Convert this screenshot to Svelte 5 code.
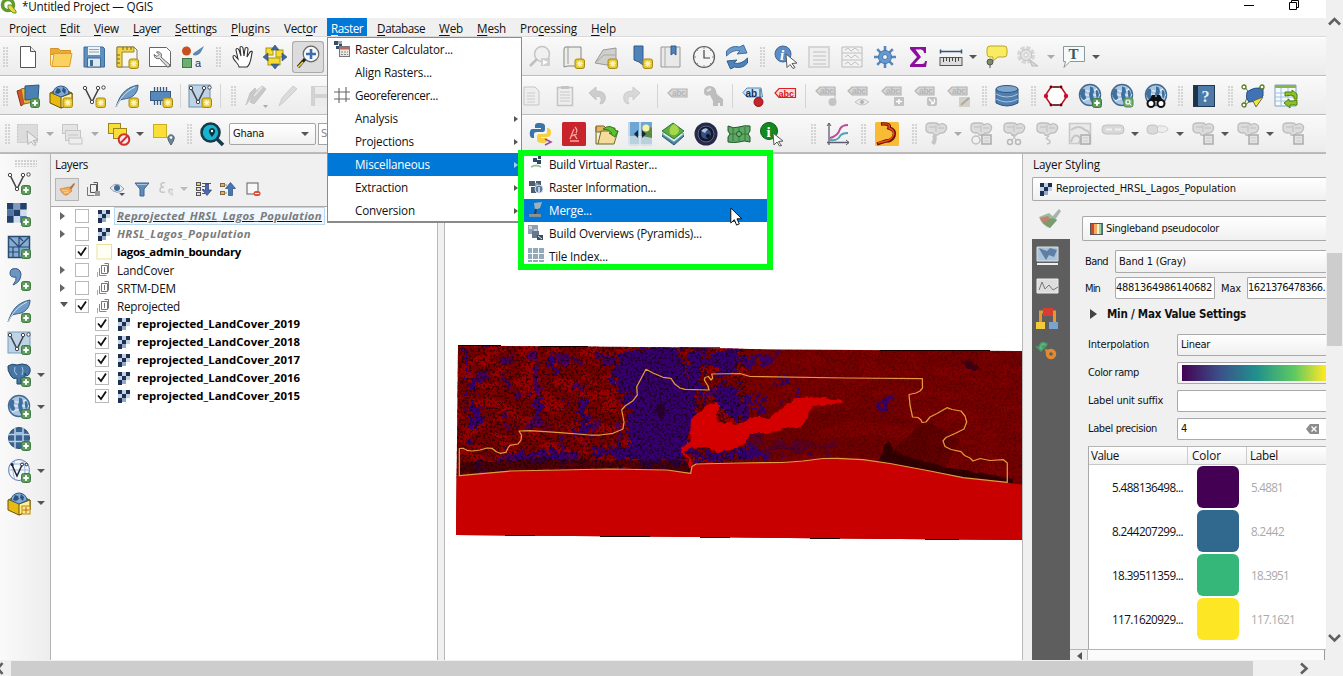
<script>
  // Stretches or tightens the tracking so a label takes the given width.
  function fit(el, w) {
    if (!w) return;
    const natural = el.getBoundingClientRect().width;
    const n = el.textContent.length;
    el.style.letterSpacing = ((w - natural) / n).toFixed(3) + 'px';
  }

  const plus = '<rect x="14.5" y="14.5" width="9" height="9" rx="2" fill="#5d9c5a" stroke="#3f7a42"/><path d="M19 16.3v5.4M16.3 19h5.4" stroke="#fff" stroke-width="2"/>';
  const star = '<rect x="14" y="14" width="9.5" height="9.5" rx="2" fill="#e6c62e" stroke="#a88a16"/><path d="M18.8 15.5v6.6M15.5 18.8h6.6M16.5 16.5l4.6 4.6M21.1 16.5l-4.6 4.6" stroke="#fff8c0" stroke-width="1.1"/>';
  const globe = '<circle cx="12" cy="11" r="10.500" fill="#a9c6e2" stroke="#44698f" stroke-width="1.400"/><path d="M5 5c5 3 9 3 14 0M2 11h20M5 17c5-3 9-3 14 0" fill="none" stroke="#fff"/><path d="M5 4.500c2 0 3 2 2 4s1 3 1 5-2 3-3 2-3-4-3-5 1-5 3-6zM12 2.500l3 1 1 4-1 3 1 4-2 5-2-4-1-5 1-4zM18 6l2 1 1 4-2 4-1-4z" fill="#3f6f9f"/>';
  const vee = '<path d="M3 4l7 14L17 4" fill="none" stroke="#444" stroke-width="1.600"/><circle cx="3" cy="4" r="1.700" fill="#fff" stroke="#444"/><circle cx="10" cy="18" r="1.700" fill="#fff" stroke="#444"/><circle cx="16" cy="4" r="1.700" fill="#fff" stroke="#444"/><circle cx="21.500" cy="3.500" r="1.700" fill="#fff" stroke="#444"/>';
  const quill = '<path d="M1 23C4 14 8 4 23 1c0 6-3 11-9 13-4 1-6 1-9 2z" fill="#6f9dc8" stroke="#3b5f86"/><path d="M1 23C5 15 10 8 20 3" fill="none" stroke="#cfe0f0"/>';
  const box3 = '<path d="M1 9l11-4 11 4v10l-11 5L1 19z" fill="#e8b90f" stroke="#6b5208"/><path d="M12 13L23 9v10l-11 5z" fill="#fff19a" stroke="#6b5208"/><path d="M1 9l11 4 11-4-3-2H4z" fill="#7d6a1c"/><path d="M4 9.500a8 7.500 0 0 1 16 0L12 13z" fill="#7fa9d6" stroke="#345a86"/><path d="M8 4l3 1 1 3-3 2-3-1zM14 3l3 3-1 4-3-3z" fill="#2f527c"/>';
  const checker = '<rect width="24" height="24" fill="#cdddec"/><path d="M0 0h8v8H0zM16 0h8v8h-8zM8 8h8v8H8zM0 16h8v8H0z" fill="#24406b"/><path d="M8 0h8v8H8z" fill="#7f9cbd"/><path d="M0 8h8v8H0zM16 16h8v8h-8z" fill="#4f75a2"/>';
  const tag = (x, y, c, f, s) => `<path d="M${x + 4} ${y}h15v8h-15l-4-4z" fill="${f}" stroke="${c}" stroke-width="1.200"/><text x="${x + 4}" y="${y + 7}" font-size="8.500" font-weight="700" font-family="Liberation Sans" textLength="14" fill="${c}">${s}</text>`;
  const G = '#bdbdbd', L = '#dcdcdc';
  const gtag = (extra) => tag(1, 3, '#b4b4b4', '#d6d6d6', 'abc') + extra;
  const blob = (extra) => `<path d="M2 4q0-3 4-3h5q3 0 4 2 2-2 5-1 4 2 2 6-2 4-6 3-2 3-6 2-1-3-3-2-4 0-5-3z" fill="${L}" stroke="${G}" stroke-width="1.300"/><path d="M5 5h6M14 6h6M12 3v7" stroke="${G}"/>` + extra;
  const gsq = '<rect x="13" y="13" width="9" height="9" fill="#e4e4e4" stroke="#b0b0b0" stroke-width="1.600"/><path d="M15 16h5M15 19h5" stroke="#ccc"/>';

  const icons = {
    file: '<path d="M4.500 1.500h10l5 5v16h-15z" fill="#fff" stroke="#555"/><path d="M14.500 1.500v5h5" fill="#eee" stroke="#555"/>',
    folder: '<path d="M1.500 3.500h8l2 2h10v4h-20z" fill="#e9a93c" stroke="#d39224"/><path d="M3 21.500L5 8.500h18l-2.500 13z" fill="#fbd25f" stroke="#dd9f2c"/><path d="M1.500 5v15l1.500 1.500" fill="none" stroke="#dd9f2c"/>',
    save: '<path d="M2 2h19l1.500 1.500V22H2z" fill="#5f8fbe" stroke="#3e6b98"/><rect x="6" y="2" width="12" height="8" fill="#eef3f8"/><path d="M7 4.500h10M7 7h10" stroke="#8aa"/><rect x="5.500" y="13" width="13" height="9" fill="#dfe8f0" stroke="#3e6b98"/><rect x="8" y="15" width="3" height="6" fill="#3e6b98"/>',
    layoutNew: '<path d="M2 2h17l3 3v17H2z" fill="#f8f8f0" stroke="#777"/><path d="M2 2h17v5H7v15H2z" fill="#f1d54a" stroke="#9b8420"/><path d="M8 2v3M12 2v3M16 2v3M2 10h3M2 14h3M2 18h3" stroke="#776010"/>' + star,
    layoutMgr: '<path d="M1.500 2.500h17l4 4v15h-21z" fill="#fff" stroke="#666"/><path d="M8.500 7q4-1 5 3l-.5 2 9 8-2 2.500-8.500-9q-5 1-5.500-4l3 2 2-2z" fill="#ddd" stroke="#666"/>',
    style: '<circle cx="5.500" cy="6" r="4.500" fill="#c8501e"/><path d="M12 10c0-3 3-3 5-5l6-4-3 6c-2 3-5 4-8 3z" fill="#5b87b5"/><rect x="1.500" y="13.500" width="9" height="9" fill="#6fae72" stroke="#3f7745"/><text x="14" y="21.500" font-size="11" font-family="Liberation Sans" fill="#333">a</text>',
    hand: '<path d="M8 22c0-3-6-7-6-10 0-2 2-2 3 0l2 2L5 5c0-2 2-2 3 0l2 6-1-8c0-2 2-2 3 0l1 8 1-7c0-2 3-2 3 0l-1 8 3-5c1-1 3-1 2 1-1 4-1 11-5 14z" fill="#fff" stroke="#333" stroke-width="1.100"/>',
    pan: '<rect x="3" y="3" width="7" height="7" fill="#f6dc2c" stroke="#a89515"/><rect x="13" y="5" width="7" height="7" fill="#f6dc2c" stroke="#a89515"/><rect x="5" y="13" width="12" height="7" fill="#f6dc2c" stroke="#a89515"/><path d="M12 0l4 5H8zM12 24l4-5H8zM0 12l5-4v8zM24 12l-5-4v8z" fill="#41689a" stroke="#2c4a74" stroke-width=".6"/>',
    zoomIn: '<circle cx="15" cy="9" r="7.800" fill="#f4f7fb" stroke="#666" stroke-width="1.200"/><path d="M15 4v10M10 9h10" stroke="#3c6fa8" stroke-width="2.600"/><path d="M9 14l-7 8" stroke="#222" stroke-width="3.200"/><path d="M7 17l-5 5" stroke="#f0d43a" stroke-width="1.700"/>',
    zoomG: '<circle cx="14" cy="9" r="7.500" fill="#f0f0f0" stroke="#c4c4c4" stroke-width="1.500"/><path d="M9 14l-7 7" stroke="#c0c0c0" stroke-width="2.500"/><rect x="13" y="13" width="9" height="8" fill="#d0d0d0"/><path d="M15 15l5 2-5 3" fill="#fff"/>',
    mapNew: '<path d="M4 2h16v19H7L3 22V4z" fill="#eeeeea" stroke="#888"/><path d="M7 2v17" stroke="#999"/>' + star,
    map3d: '<path d="M9 5l13-2v12l-9 5L1 18z" fill="#cfcfcb" stroke="#999"/><path d="M1 18l9-8h12" fill="none" stroke="#aaa"/>' + star,
    bmNew: '<path d="M5 1h9v19l-4-3-5-2z" fill="#4e82b8" stroke="#2f5b8b"/>' + star,
    bm: '<path d="M2 2h19v20H2z" fill="#e9e9e9" stroke="#999"/><path d="M6 2v20" stroke="#aaa"/><path d="M12 1h5v9l-2.500-2L12 10z" fill="#4e82b8" stroke="#2f5b8b"/>',
    clock: '<circle cx="12" cy="12" r="10.500" fill="#f4f4f4" stroke="#5c5c5c" stroke-width="1.200"/><path d="M12 5v8h6" fill="none" stroke="#444" stroke-width="1.200"/><path d="M12 2v2M12 20v2M2 12h2M20 12h2M5 5l1 1M19 5l-1 1M5 19l1-1M19 19l-1-1" stroke="#888"/>',
    refresh: '<path d="M1.500 11V6q5-6 13-4l4-2 3.500 8-10 1 3-3Q8 4 1.500 11z" fill="#6a99cb" stroke="#3f6ea3"/><path d="M22.500 13v5q-5 6-13 4l-4 2L2 16l10-1-3 3q7 2 13.500-5z" fill="#4e82b8" stroke="#31608f"/>',
    identify: '<circle cx="9" cy="9" r="8" fill="#5b8dc4" stroke="#40699b"/><text x="6" y="15" font-size="15" font-style="italic" font-weight="700" font-family="Liberation Serif" fill="#fff">i</text><path d="M12 9l11 9-5 .5 3 4-2 1-3-4-3 3z" fill="#fff" stroke="#555"/>',
    tableG: '<path d="M2 2h20v20H2z" fill="#efefef" stroke="#d6d6d6" stroke-width="2"/><path d="M6 7h13M6 11h13M6 15h13M6 19h13" stroke="#cfcfcf" stroke-width="1.500"/>',
    calcG: '<path d="M2 2h20v20H2z" fill="#f2f2f2" stroke="#bbb"/><path d="M2 8h20M2 15h20M5 5l3-2 3 3 4-3 4 3M5 12l3-2 3 3 4-3 4 3M5 19l3-2 3 3 4-3 4 3" fill="none" stroke="#c0c0c0"/>',
    gear: '<path d="M12 1v22M1 12h22M4.200 4.200l15.600 15.600M19.800 4.200L4.200 19.800" stroke="#5688bf" stroke-width="2.600"/><circle cx="12" cy="12" r="6.500" fill="#6799cf" stroke="#4577ae"/><circle cx="12" cy="12" r="2.500" fill="#eef4fa" stroke="#4577ae"/>',
    sigma: '<path d="M4 2h16v6h-2q0-3-3-3.500H9.500L15 12l-6.500 7H16q3 0 3-3h2l-1 6H4v-2l7-8L4 4z" fill="#8b0f9c"/>',
    ruler: '<path d="M1.500 6.500h21M1.500 4.500v4M22.500 4.500v4" stroke="#34557b" stroke-width="1.500"/><rect x="1" y="12.500" width="22" height="8" fill="#ddd" stroke="#555"/><path d="M4.500 13v4M7.500 13v3M10.500 13v4M13.500 13v3M16.500 13v4M19.500 13v3" stroke="#444"/>',
    tip: '<path d="M6 1h14q3 0 3 3v5q0 3-3 3h-6l-5 4v-4H6q-3 0-3-3V4q0-3 3-3z" fill="#f9ec62" stroke="#baa822"/><circle cx="6" cy="17" r="3" fill="#7d8b63" stroke="#555"/><path d="M6 20v3" stroke="#555"/>',
    gearG: '<circle cx="10" cy="10" r="7" fill="none" stroke="#d6d6d6" stroke-width="4" stroke-dasharray="4 1.500"/><circle cx="10" cy="10" r="5.500" fill="#e3e3e3" stroke="#c4c4c4"/><circle cx="10" cy="10" r="2" fill="#f5f5f5" stroke="#ccc"/><path d="M14 15l8 6h-6z" fill="#d8d8d8" stroke="#bbb"/>',
    textT: '<path d="M1.500 1.500h21v15H8l-6 6 1.500-6h-2z" fill="#f6f9f9" stroke="#8d9999"/><text x="6.500" y="14" font-size="15" font-weight="700" font-family="Liberation Serif" fill="#3c5a5a">T</text>',
    dataSrc: '<path d="M1 7l9-3 4 11-9 7z" fill="#d5532d" stroke="#8f2e12"/><path d="M5 5l10-2 2 15-9 2z" fill="#ebb436" stroke="#9a6b10"/><path d="M9 2l14-1-1 14-13 1z" fill="#4b80b5" stroke="#2d5680"/>' + plus,
    boxNew: box3 + star,
    box: box3 + '<rect x="15" y="15" width="8" height="8" fill="#f9ed86" stroke="#b8860b"/><path d="M19 16v6M16 19h6" stroke="#d05a1c"/>',
    veeNew: vee + star, veeAdd: vee + plus,
    quillNew: quill + star, quillAdd: quill + plus,
    chip: '<path d="M5.500 3v18M8.500 3v18M11.500 3v18M14.500 3v18M17.500 3v18" stroke="#345a82" stroke-width="1.300"/><rect x="1.500" y="7.500" width="20" height="9" fill="#5788bb" stroke="#345a82"/>' + star,
    vboxNew: '<rect x="1" y="1" width="21" height="22" fill="#bcd3e8" stroke="#6d8fae"/>' + vee + star,
    vboxAdd: '<rect x="1" y="1" width="22" height="21" fill="#bcd3e8" stroke="#7b9cba"/>' + vee + plus,
    pencilsG: '<path d="M6 18l4-9 8-7 4 3-7 9-5 6zM2 21l4-12 5-5 1 2z" fill="#c9c9c9" stroke="#c4c4c4"/><path d="M10 12l8-9" stroke="#e8e8e8" stroke-width="1.500"/><path d="M19 21h5l-2.500 3z" fill="#aaa"/>',
    pencilG: '<path d="M3 22l3-8L17 2l4 3L9 17z" fill="#dcdcdc" stroke="#ccc"/>',
    saveG: '<path d="M1 2h21v20H1z" fill="#d2d2d2"/><path d="M5 3h13v7H5zM5 14h13v8H5z" fill="#ebebeb"/>',
    docG: '<path d="M2 3h11l4 4v14H2z" fill="#eee" stroke="#c5c5c5"/><path d="M5 9h8M5 12h8M5 15h8M5 18h8" stroke="#ccc"/>',
    clipG: '<path d="M4.500 3.500h15v18h-15z" fill="#eee" stroke="#c4c4c4" stroke-width="1.500"/><path d="M8 2h8v3H8z" fill="#c4c4c4"/><path d="M7 8h10M7 11h10M7 14h10M7 17h10" stroke="#c8c8c8"/>',
    undoG: '<path d="M3 9l7-6v4q11 0 9 9-1 4-5 4 4-8-4-8v4z" fill="#cdcdcd" stroke="#c4c4c4"/>',
    redoG: '<path d="M21 9l-7-6v4Q3 7 5 16q1 4 5 4-4-8 4-8v4z" fill="#d8d8d8" stroke="#ccc"/>',
    abcG: tag(1, 5, '#b4b4b4', '#dadada', 'abc'),
    blobG: '<path d="M3 9q-1-6 5-7 6 0 7 5 0 3 3 5l4 3v7h-3v-3h-2v3h-5v-5l-3-6q-5 2-6-2z" fill="#bdbdbd"/><path d="M6 7l4-2" stroke="#e4e4e4" stroke-width="2"/>',
    abColor: '<path d="M6 4h14l1.500 9H6L2 8.500z" fill="#cfe4f7" stroke="#4d8cc2"/><text x="4.500" y="12.500" font-size="10" font-weight="700" font-family="Liberation Sans" fill="#15304f">ab</text><path d="M19 5v9" stroke="#345"/><circle cx="17.500" cy="18" r="4.500" fill="#c8232a" stroke="#8e1218"/>',
    abcRed: '<path d="M6 4.500h16.500v9H6L2 9z" fill="#ffdcdc" stroke="#e02020" stroke-width="1.200"/><text x="5.500" y="12.500" font-size="9" font-weight="700" font-family="Liberation Sans" fill="#d01818" textLength="15.500">abc</text>',
    tg1: gtag('<path d="M20 6v12" stroke="#bbb"/><circle cx="17.500" cy="18" r="4" fill="#c4c4c4"/>'),
    tg2: gtag('<path d="M8 18q6-6 14 0-7 6-14 0z" fill="#e8e8e8" stroke="#c4c4c4"/><circle cx="15" cy="18" r="2" fill="#b4b4b4"/>'),
    tg3: gtag('<rect x="13" y="13" width="10" height="9" rx="1" fill="#c2c2c2"/><path d="M18 15v5M15 17.500h6" stroke="#fff" stroke-width="1.500"/>'),
    tg4: gtag('<rect x="13" y="13" width="10" height="9" rx="2" fill="#c2c2c2"/><path d="M15 15l5 5M20 15q2 4-3 5" stroke="#fff" stroke-width="1.300" fill="none"/>'),
    tg5: gtag('<path d="M12 13h11v10H12z" fill="#d4d0c4"/><path d="M14 21l8-7" stroke="#aaa" stroke-width="2"/>'),
    db: '<path d="M1 5v14q11 6 22 0V5z" fill="#4f7fb0" stroke="#2e567f"/><ellipse cx="12" cy="5" rx="11" ry="3.500" fill="#7ea6ce" stroke="#2e567f"/><path d="M1 10q11 6 22 0M1 15q11 6 22 0" fill="none" stroke="#a9c4de"/>',
    hex: '<path d="M7 3h10l6 9-6 9H7l-6-9z" fill="#fff" stroke="#b5121f" stroke-width="1.500"/><path d="M9 3h6M9 21h6" stroke="#222"/><circle cx="2" cy="12" r="2.200" fill="#c8102e"/><circle cx="22" cy="12" r="2.200" fill="#c8102e"/><circle cx="7" cy="3" r="1.400" fill="#600"/><circle cx="17" cy="3" r="1.400" fill="#600"/><circle cx="7" cy="21" r="1.400" fill="#600"/><circle cx="17" cy="21" r="1.400" fill="#600"/>',
    globeAdd: globe + plus,
    globeFind: globe + '<rect x="14" y="14" width="9" height="9" rx="2" fill="#76b077" stroke="#4b8a50"/><circle cx="18" cy="18" r="2" fill="none" stroke="#fff" stroke-width="1.200"/><path d="M19.500 19.500l2 2" stroke="#fff"/>',
    globeBino: globe + '<path d="M5 17l3-6h3v2h2v-2h3l3 6z" fill="#111"/><circle cx="7" cy="19.500" r="3.500" fill="#fff" stroke="#111" stroke-width="2"/><circle cx="17" cy="19.500" r="3.500" fill="#fff" stroke="#111" stroke-width="2"/>',
    globe2: '<circle cx="12" cy="11" r="10.500" fill="#3a6390" stroke="#2c4a6b"/><path d="M8 1v20M16 1v20M1 7.500h22M1 14.500h22" stroke="#bcd2e8" stroke-width="1.500"/><path d="M8 5h8v3H8z" fill="#9fc0e2"/>' + plus,
    globeV: '<circle cx="12" cy="11" r="10.500" fill="#f4f8ff" stroke="#5c7ba8"/><path d="M1 11h22M8 1q-4 10 0 20M16 1q4 10 0 20M4 5h16" fill="none" stroke="#9db7da"/><path d="M5 6l5 11 5-11" fill="none" stroke="#223" stroke-width="1.500"/><circle cx="5" cy="5.500" r="1.500" fill="#223"/><circle cx="15" cy="5.500" r="1.500" fill="#fff" stroke="#223"/><circle cx="19.500" cy="5.500" r="1.300" fill="#fff" stroke="#223"/>' + plus,
    help: '<rect x="1.500" y="1.500" width="21" height="21" fill="#4b7aa9" stroke="#203850"/><path d="M2 2h4v20H2z" fill="#1f3346"/><text x="9.500" y="18" font-size="16" font-family="Liberation Serif" font-weight="700" fill="#e5f0fa">?</text>',
    poly: '<path d="M4 3l4 6-5 12M20 3l-6 4M4 21l8-6" stroke="#587a25" fill="none"/><path d="M6 8q8-6 16-3v7l-6 5-8 1q-4-4-2-10z" fill="#3f73b6" stroke="#27508a"/><circle cx="3" cy="3" r="2" fill="#fff" stroke="#587a25" stroke-width="1.300"/><circle cx="21" cy="3" r="2" fill="#fff" stroke="#587a25" stroke-width="1.300"/><circle cx="3" cy="21" r="2" fill="#fff" stroke="#587a25" stroke-width="1.300"/><path d="M12 17l10-4-7 10z" fill="#f5e92b" stroke="#666"/>',
    sheet: '<path d="M1 1h21v21H1z" fill="#f4faff" stroke="#7da4c4"/><path d="M1 1h21v3H1z" fill="#8bb544"/><path d="M1 9h20M1 13h20M1 17h20M7 4v18M14 4v18" stroke="#9fc0da"/><path d="M11 12V8h7V6l5 4v5h-3v-3h-2v-1zM23 16v5h-7v3l-6-5 5-4v2h4z" fill="#8cc226" stroke="#51800f"/>',
    selG: '<path d="M1.500 2.500h20v18h-20z" fill="#dcdcdc" stroke="#c4c4c4" stroke-dasharray="2 1"/><path d="M11 9l11 9-5 .5 3 4-2 1-3-4-3 3z" fill="#eee" stroke="#b4b4b4"/>',
    sel2G: '<rect x="1.500" y="2.500" width="15" height="9" fill="#e4e4e4" stroke="#c6c6c6"/><rect x="4.500" y="8.500" width="15" height="10" fill="#e4e4e4" stroke="#c6c6c6"/><path d="M7 13h10M7 16h14v6H8v-6" stroke="#c6c6c6" fill="#eee"/>',
    desel: '<rect x="1.500" y="1.500" width="12" height="10" fill="#f8de37" stroke="#9b8718"/><rect x="6.500" y="6.500" width="13" height="10" fill="#f8de37" stroke="#9b8718"/><circle cx="17" cy="17.500" r="5.300" fill="#fbe5e5" stroke="#cf3030" stroke-width="2"/><path d="M13.500 21l7-7" stroke="#cf3030" stroke-width="2"/>',
    selPin: '<rect x="1.500" y="2.500" width="13" height="13" fill="#f8de37" stroke="#c9ae20"/><path d="M19 23q-4-6-3-8.500 3-3.500 6 0 1 2.500-3 8.500z" fill="#6e8596" stroke="#4e6170"/><circle cx="19" cy="15.500" r="1.300" fill="#fff"/>',
    lens: '<circle cx="10.500" cy="10.500" r="9" fill="#18b4cf" stroke="#173a48" stroke-width="2.600"/><path d="M17 17l6 6" stroke="#173a48" stroke-width="3.500"/><path d="M12 15q-4-5-3-7 3-4 6 0 1 2-3 7z" fill="#10303c"/><circle cx="12" cy="9" r="1.200" fill="#fff"/>',
    python: '<path d="M11 1c-6 0-5 2-5 5h6v1H3c-3 0-3 9 0 9h2v-4q0-2 3-2h6q2 0 2-3V4c0-2-2-3-5-3z" fill="#3a75a8"/><path d="M13 21c6 0 5-2 5-5h-6v-1h7c4 0 4-9 0-9h-1v4q0 2-3 2h-5q-2 0-2 3v3c0 2 2 3 5 3z" fill="#f8cf43"/><path d="M16 17l6 3-6 3" stroke="#934a9b" stroke-width="1.500" fill="none"/>',
    red: '<rect width="24" height="24" rx="1.500" fill="#c9242c"/><path d="M13 5q3 3 1 6M12 7l-4 10M12 12l3 5M10 14l5-2M8 19h9" stroke="#f3a9a4" fill="none" stroke-width="1.300"/>',
    folderG: '<path d="M1 4h8l2 2h9v4H1z" fill="#e4b55f" stroke="#7a6526"/><path d="M1 5v17h18l4-13H6L3 22" fill="#f6dc9a" stroke="#6b6a26"/><path d="M8 7q8-6 13 2h2l-3 6-6-4h3q-3-4-9-4z" fill="#59c234" stroke="#2b7d16"/>',
    sky: '<rect width="24" height="24" fill="#6fa6d4"/><path d="M0 14h24v10H0z" fill="#b9d0dd"/><path d="M12 0v24M1 0v24M0 23h24" stroke="#dfe9f4" stroke-width="1.500"/><path d="M14 14q5-12 10-8v10z" fill="#5a8a49"/><circle cx="18" cy="6" r="3.500" fill="#f4f49c"/><path d="M6 12l4-4v8zM18 12l-4-4v8z" fill="#15253a"/>',
    layersG: '<path d="M1 14l12 9 10-9-12-7z" fill="#4c7f9e" stroke="#2c5a74"/><path d="M1 12l12 8 10-8-12-7z" fill="#d9eef2" stroke="#6aa"/><path d="M1 9l12 8 10-8L12 1z" fill="#5cab45" stroke="#2f7d2c"/><path d="M9 12q-2-7 4-10 7 4 4 9-3 4-8 1z" fill="#a6d84a"/>',
    camera: '<circle cx="12" cy="12" r="11.500" fill="#252a48"/><circle cx="12" cy="12" r="8" fill="#14182a" stroke="#5c6389"/><circle cx="12" cy="12" r="5" fill="#34508a"/><path d="M7 9q3-4 7-2l-3 4z" fill="#a8c6e2"/><circle cx="14" cy="14" r="2" fill="#111"/>',
    puzzle: '<path d="M1 4q6 3 11 1 6-2 11-1v5l-2 3 2 3v5q-6-2-11 0-5 1-11 0v-5l2-3-2-3z" fill="#5fa765" stroke="#20582a"/><path d="M12 5v14M2 12h20M6 5v14M18 5v14" stroke="#34783c"/><circle cx="12" cy="12" r="2.500" fill="#6dbb74" stroke="#20582a"/>',
    infoG: '<circle cx="9" cy="9" r="8.500" fill="#138a1f" stroke="#0c6015"/><text x="6.500" y="15" font-size="15" font-weight="700" font-family="Liberation Serif" fill="#fff">i</text><path d="M13 11l10 8-4.500.5 3 4-2 .5-2.500-4-3 3z" fill="#fff" stroke="#555"/>',
    chart: '<path d="M3 1v22M1 20.500h22" stroke="#5d5d6d" stroke-width="1.300" fill="none"/><path d="M1 4l2-3 2 3M20 18l3 2.500-3 2.500" fill="none" stroke="#5d5d6d"/><path d="M4 16q8-2 10-9 2-4 8-4" stroke="#c04a98" stroke-width="2" fill="none"/><path d="M4 18q8 1 10-4 2-3 8-3" stroke="#4da3b8" stroke-width="2" fill="none"/>',
    river: '<rect width="24" height="24" rx="1.500" fill="#f8bb35"/><path d="M6 2q10-1 8 4 7 2 5 8-2 5-8 5l-9 3" fill="none" stroke="#6b1108" stroke-width="3.400"/><path d="M7 2q9-1 7 4 7 3 4 8-2 4-7 5l-8 2" fill="none" stroke="#f04a1c" stroke-width="1.400"/>',
    b1: blob('<path d="M10 13q2 4-1 9" stroke="#c4c4c4" stroke-width="4" fill="none"/>'),
    b2: blob('<circle cx="7" cy="18" r="4" fill="none" stroke="#c0c0c0" stroke-width="1.500"/>' + gsq),
    b3: blob('<circle cx="8" cy="20" r="2.500" fill="none" stroke="#b8b8b8" stroke-width="1.500"/><circle cx="16" cy="20" r="2.500" fill="none" stroke="#b8b8b8" stroke-width="1.500"/><path d="M10 18l6-7M14 18l-4-6" stroke="#b8b8b8"/>'),
    b4: blob('<path d="M14 14q-5 3 0 4 3 3-2 4" fill="none" stroke="#c0c0c0" stroke-width="1.500"/>'),
    b5: '<path d="M1.500 1.500h21v20h-21z" fill="#e9e9e9" stroke="#cacaca" stroke-width="1.600"/><path d="M3 8q8-6 14 0 4 1 5 4M3 20q2-8 7-6 4 2 1 7" fill="none" stroke="#c6c6c6" stroke-width="2"/>' + gsq,
    b6: '<rect x="1" y="3" width="22" height="9" rx="4" fill="#d8d8d8" stroke="#c2c2c2"/><path d="M5 7.500h6M14 7.500h6" stroke="#f0f0f0" stroke-width="2"/>',
    b7: '<rect x="1" y="3" width="11" height="9" rx="4" fill="#dadada" stroke="#c2c2c2"/><path d="M12 4q10-1 10 4-4 4-10 2" fill="#ededed" stroke="#d0d0d0"/>',
    b8: blob(gsq),
    rasterAdd: '<g transform="scale(.82)">' + checker + '</g>' + plus,
    meshAdd: '<rect x="1.500" y="1.500" width="21" height="21" fill="#86acd2" stroke="#2b4d72" stroke-width="1.500"/><path d="M12 1v22M1 12h22M2 2l10 10M12 12L22 2M6 12v10M2 17h10M12 2l4 4" stroke="#274a70" fill="none" stroke-width="1.200"/>' + plus,
    comma: '<path d="M5 2q8-2 9 5 0 8-8 11 4-5 3-8-6 1-6-4 0-3 2-4z" fill="#6c95c2" stroke="#345b86"/>' + plus,
    elephant: '<path d="M1 3q4-3 9-1 5-2 10 0 4 2 3 7-1 4-4 4l-1-3v4l-4 1v6h-4v-6Q6 17 4 13 0 7 1 3z" fill="#4576a6" stroke="#234866"/><path d="M8 4q-2 5 2 8M15 4q2 3 0 8" stroke="#a9c8e4" fill="none"/>' + plus,
  };

  const small = {
    brush: '<path d="M10 7l5-5 1 1-4 6z" fill="#b5763a"/><path d="M1 8l9-2 3 4-5 4q-4 1-7-6z" fill="#f0a95a" stroke="#d9783a" stroke-width=".7"/><path d="M3 9l6 1M5 12l5-1" stroke="#f8d38a"/>',
    group: '<path d="M5.500 3.500h6v8h-6zM8.500 1.500h4v9M8.500 5v5" fill="none" stroke="#777"/><path d="M3.500 6v7.500h7" fill="none" stroke="#888"/><path d="M1.500 10v5" stroke="#aaa"/>',
    groupAdd: '<path d="M5.500 11.500v-8h6v8zM8.500 1.500h4v9" fill="none" stroke="#555"/><path d="M2.500 6v8.500h7" fill="none" stroke="#777"/><rect x="10" y="10" width="5" height="5" fill="#999"/>',
    eye: '<path d="M0 7q7-8 14 1-7 7-14-1z" fill="#e8eef4" stroke="#99a"/><circle cx="7" cy="7" r="3" fill="#3f6c92"/><path d="M9 12h6l-3 3z" fill="#456"/>',
    filter: '<path d="M1 2h14l-5 6v7H6V8z" fill="#5f8cbb" stroke="#41658d"/><path d="M3 3.500h10" stroke="#a8c6e2"/>',
    expr: '<path d="M6 2Q2 1 2 4q0 2 3 2-4 0-4 3t5 2M14 9q-4-2-4 1 0 3 4 4" stroke="#c8c8c8" stroke-width="1.600" fill="none"/><circle cx="12" cy="12" r="2" fill="#ddd"/>',
    expand: '<rect x=".5" y="1.500" width="4" height="3" fill="#f4d23c" stroke="#555"/><rect x=".5" y="6.500" width="4" height="3" fill="#ddd" stroke="#555"/><rect x=".5" y="11.500" width="4" height="3" fill="#ddd" stroke="#555"/><path d="M6 2.500h9M6 5.500h3M6 8.500h2M6 12.500h3" stroke="#556"/><path d="M9.500 3h3v6h3L11 14.500 6.500 9h3z" fill="#4a6bb0" stroke="#2c4379" stroke-width=".7"/>',
    collapse: '<rect x=".5" y="2.500" width="4" height="3" fill="#f4b23c" stroke="#765"/><rect x=".5" y="10.500" width="4" height="3" fill="#f4b23c" stroke="#765"/><path d="M4 4h3M4 12h3" stroke="#b84"/><path d="M8.500 14.500v-7h-3L10.500 1.500l5 6h-3v7z" fill="#4477b5" stroke="#2c4f80" stroke-width=".7"/>',
    remove: '<rect x="2" y="2" width="11" height="11" fill="#f8f8f8" stroke="#777" stroke-width="1.200"/><rect x="8.500" y="10" width="7" height="5" rx="2.500" fill="#e04c38"/><path d="M10 12.500h4" stroke="#fff"/>',
    raster: '<path d="M2 2h4v4H2zM10 2h4v4h-4zM6 6h4v4H6zM2 10h4v5H2z" fill="#1d3054"/><path d="M6 2h4v4H6zM2 6h4v4H2zM10 6h4v4h-4z" fill="#c3d2e4"/><path d="M6 10h4v4H6z" fill="#93abc8"/>',
    poly: '<rect x="1" y=".5" width="14.500" height="14.500" fill="#fffff4" stroke="#ecdf9c"/>',
    calc: '<path d="M0 0h4v4H0zM5 3h3v3H5zM2 5h3v3H2z" fill="#35506b"/><path d="M4 0h4v3H4z" fill="#9ab"/><rect x="5.500" y="5.500" width="10" height="10" fill="#ece6e2" stroke="#777"/><path d="M5 6h11v2.500H5z" fill="#b76a5c"/><path d="M7 11h7M7 13.500h7" stroke="#888" stroke-dasharray="2 1"/>',
    georef: '<path d="M5 1v15M12 0v15M0 5h16M0 12h16" stroke="#666" stroke-width="1.100" fill="none"/>',
    vrt: '<path d="M5 2h4v4H5zM10 0h3v3h-3zM9 4h4v4H9z" fill="#2e4a62"/><path d="M3 11q5-3 10 0" stroke="#9cc0a4" stroke-width="2" fill="none"/>',
    rinfo: '<path d="M1 2h6v5H1zM8 2h5v4H8zM3 8h5v6H3z" fill="#4a6076"/><path d="M7 4h3v5H7z" fill="#8c9dae"/><circle cx="11" cy="10" r="4" fill="#5b7b9c" stroke="#dde"/><path d="M11 8v5" stroke="#fff" stroke-width="1.300"/>',
    merge: '<path d="M6 1l8-1-2 6-5 2z" fill="#a4b0b7"/><path d="M8 7l-1 5" stroke="#3a3a3a" stroke-width="2"/><path d="M1 12h12v3H1z" fill="#7f8f98"/><path d="M3 13h8" stroke="#b98a6b"/>',
    over: '<path d="M0 0h10v9H0z" fill="#8fa0b0"/><path d="M1 1h3v3H1zM6 4h3v3H6z" fill="#c9d3dc"/><path d="M4 6h7v7H4z" fill="#64798e"/><path d="M9 10h6v5H9z" fill="#3c4d5d"/><path d="M10 11l4 3" stroke="#eee"/>',
    tile: '<path d="M0 0h4v5H0zM5 0h5v5H5zM11 0h5v5h-5zM0 6h4v5H0zM5 6h5v5H5zM11 6h5v5h-5zM0 12h4v2H0zM5 12h5v2H5zM11 12h5v2h-5z" fill="#93abb9"/>',
    ramp: '<rect x=".5" y="2.500" width="12" height="11" fill="#f8f3cc" stroke="#555"/><path d="M1 3h3v10H1z" fill="#d6422c"/><path d="M4 3h3v10H4z" fill="#f5a95a"/><path d="M9 3h2v10H9z" fill="#9fd09f"/><path d="M11 3h1.500v10H11z" fill="#3b86a8"/>',
  };

  const g = 'grip', a = 'arr', al = 'arrL', sp = 'sep';
  const bars = [
    [[g,6],['file',28],['folder',61],['save',94],['layoutNew',127],['layoutMgr',160],['style',193],[g,219],['hand',243],['pan',275],['zoomIn',308],
     ['zoomG',540],['mapNew',573],['map3d',606],['bmNew',641],['bm',671],['clock',704],['refresh',737],[g,763],['identify',786],['tableG',819],['calcG',852],['gear',885],['sigma',918],['ruler',951],[a,973],['tip',996],['gearG',1028],[al,1051],['textT',1074],[a,1096]],
    [[g,6],['dataSrc',28],['boxNew',61],['veeNew',94],['quillNew',127],['chip',161],[sp,181],['vboxNew',200],[sp,221],[g,234],['pencilsG',256],['pencilG',288],['saveG',322],
     ['docG',534],['clipG',565],['undoG',598],['redoG',631],[sp,658],['abcG',679],['blobG',713],[sp,733],['abColor',753],['abcRed',785],[sp,806],['tg1',827],['tg2',859],['tg3',893],['tg4',926],['tg5',959],[g,985],['db',1007],[g,1034],['hex',1056],['globeAdd',1090],['globeFind',1122],['globeBino',1156],[g,1181],['help',1204],[g,1231],['poly',1253],['sheet',1286]],
    [[g,8],['selG',28],[al,50],['sel2G',73],[al,95],['desel',119],[a,140],['selPin',164],[g,190],['lens',212],['combo',272.5],['entry',419],
     ['python',541],['red',574],['folderG',607],['sky',640],['layersG',673],['camera',706],['puzzle',739],['infoG',772],[g,814],['chart',838],[g,864],['river',887],[g,915],['b1',936],[al,958],['b2',981],['b3',1014],['b4',1047],['b5',1080],['b6',1113],[a,1135],['b7',1158],[a,1180],['b8',1203],[a,1225],['b8',1248],[a,1270],['b8',1293]],
  ];
  const widths = { grip: 6, arr: 8, arrL: 8, sep: 2, combo: 87, entry: 202 };
  const toolbars = bars.map((row) => {
    let end = 0;
    return row.map(([k, c]) => {
      const w = widths[k] ?? 24;
      const gap = c - w / 2 - end;
      end = c + w / 2;
      return { k, gap };
    });
  });

  const menus = [['Pro<u>j</u>ect',37],['<u>E</u>dit',20],['<u>V</u>iew',25],['<u>L</u>ayer',28],['<u>S</u>ettings',42],['<u>P</u>lugins',39],['Vect<u>o</u>r',33],['<u>R</u>aster',32],['<u>D</u>atabase',48],['<u>W</u>eb',24],['<u>M</u>esh',29],['Pro<u>c</u>essing',57],['<u>H</u>elp',25]];
  const rasterMenu = [['Raster Calculator...',98,'calc'],['Align Rasters...',77],['Georeferencer...',83,'georef'],['Analysis',43,,1],['Projections',59,,1],['Miscellaneous',75,,1],['Extraction',53,,1],['Conversion',60,,1]];
  const subMenu = [['Build Virtual Raster...',108,'vrt'],['Raster Information...',107,'rinfo'],['Merge...',43,'merge'],['Build Overviews (Pyramids)...',153,'over'],['Tile Index...',59,'tile']];
  const layers = [
    { n: 'Reprojected_HRSL_Lagos_Population', w: 205, i: 'raster', e: 'c', s: 'off', focus: true },
    { n: 'HRSL_Lagos_Population', w: 134, i: 'raster', e: 'c', s: 'off' },
    { n: 'lagos_admin_boundary', w: 124, i: 'poly', on: 1, s: 'bold' },
    { n: 'LandCover', w: 57, i: 'group', e: 'c' },
    { n: 'SRTM-DEM', w: 59, i: 'group', e: 'c' },
    { n: 'Reprojected', w: 63, i: 'group', e: 'o', on: 1 },
    ...[2019, 2018, 2017, 2016, 2015].map((y) => ({ n: 'reprojected_LandCover_' + y, w: 163, i: 'raster', on: 1, s: 'bold', child: true })),
  ];
  const side = [['veeAdd'],['rasterAdd'],['meshAdd'],['comma'],['quillAdd'],['vboxAdd'],['elephant',1],['globeAdd',1],['globe2'],['globeV',1],['box',1]];
  const classes = [['5.488136498...',71,'#440154','5.4881',32],['8.244207299...',71,'#31688e','8.2442',33],['18.39511359...',71,'#35b779','18.3951',38],['117.1620929...',71,'#fde725','117.1621',44]];
</script>

{#snippet ic(k)}<svg class="ic" width="24" height="24" viewBox="0 0 24 24">{@html icons[k]}</svg>{/snippet}
{#snippet sm(k)}<svg class="sm" width="16" height="16" viewBox="0 0 16 16">{@html small[k] ?? ''}</svg>{/snippet}
{#snippet tx(s, w, c = '')}<span class="tx {c}" use:fit={w}>{@html s}</span>{/snippet}

<div class="screen">
  <div class="app">
    <header class="title">
      <svg class="logo" width="17" height="14" viewBox="0 0 17 14"><circle cx="8" cy="5" r="5.500" fill="none" stroke="#5f9a2e" stroke-width="3.600"/><path d="M8 5l3 0 5 6v2h-3L8 8z" fill="#f0d33c" stroke="#5f9a2e"/></svg>
      {@render tx('*Untitled Project — QGIS', 131)}
      <svg class="winbtn" width="60" height="14" viewBox="0 0 60 14"><path d="M2 5.500h10" stroke="#000"/><path d="M47.500 2.500h7v7h-7zM49.500 2V.500h7v7H55" fill="none" stroke="#000"/></svg>
    </header>

    <nav class="menubar">
      {#each menus as [m, w], i}
        <span class="menu" class:open={i === 7}>{@render tx(m, w)}</span>
      {/each}
    </nav>

    {#each toolbars as row}
      <div class="toolbar">
        {#each row as { k, gap }}
          <div class="slot {k}" style="margin-left:{gap}px">
            {#if k === 'combo'}{@render tx('Ghana', 31, 'tah')}<i class="down"></i>
            {:else if k === 'entry'}<span class="tx tah ph">S</span>
            {:else if icons[k]}{@render ic(k)}{/if}
          </div>
        {/each}
      </div>
    {/each}

    <main>
      <aside class="side">
        <div class="hgrip"></div>
        {#each side as [k, drop]}
          <div class="srow">{@render ic(k)}{#if drop}<i class="down"></i>{/if}</div>
        {/each}
      </aside>

      <section class="layers">
        <h2>{@render tx('Layers', 33)}</h2>
        <div class="ltools">
          <span class="lt active">{@render sm('brush')}</span>
          {#each ['groupAdd', 'eye', 'filter', 'expr'] as k}<span class="lt">{@render sm(k)}</span>{/each}
          <i class="down light"></i>
          {#each ['expand', 'collapse', 'remove'] as k}<span class="lt">{@render sm(k)}</span>{/each}
        </div>
        <div class="tree">
          {#each layers as l}
            <div class="lrow" class:child={l.child}>
              <span class="exp {l.e ?? ''}"></span>
              <span class="cb">{#if l.on}<svg width="12" height="12" viewBox="0 0 12 12"><path d="M2 5.500l3 3.500 5-7.500" fill="none" stroke="#111" stroke-width="1.800"/></svg>{/if}</span>
              {@render sm(l.i)}
              <span class="lname" class:focus={l.focus}>{@render tx(l.n, l.w, l.s ?? '')}</span>
            </div>
          {/each}
        </div>
      </section>

      <section class="canvas">
        <svg width="577" height="506" viewBox="445 154 577 506">
          <defs>
            <clipPath id="ras"><path d="M458 345.500L586 346.500 680 347.500 780 349.500 1022 351V540L840 538.500 700 537 456 535z"/></clipPath>
            <filter id="specks" x="0" y="0" width="1" height="1" color-interpolation-filters="sRGB"><feTurbulence type="fractalNoise" baseFrequency=".42" numOctaves="3" seed="4"/><feColorMatrix values="0 0 0 0 .08  0 0 0 0 0  0 0 0 0 .02  6 5 0 0 -5.500"/></filter>
            <filter id="patch" x="0" y="0" width="1" height="1" color-interpolation-filters="sRGB"><feTurbulence type="fractalNoise" baseFrequency=".07 .06" numOctaves="5" seed="11"/><feColorMatrix values="0 0 0 0 .2  0 0 0 0 0  0 0 0 0 .47  16 0 0 0 -10.300"/></filter>
            <filter id="reds" x="0" y="0" width="1" height="1" color-interpolation-filters="sRGB"><feTurbulence type="fractalNoise" baseFrequency=".05 .09" numOctaves="5" seed="23"/><feColorMatrix values="0 0 0 0 .66  0 0 0 0 0  0 0 0 0 0  0 9 0 0 -4.400"/></filter>
            <filter id="rag" x="-.1" y="-.1" width="1.200" height="1.200"><feTurbulence type="fractalNoise" baseFrequency=".13" numOctaves="4" seed="7"/><feDisplacementMap in="SourceGraphic" scale="22" xChannelSelector="R" yChannelSelector="G"/></filter>
            <filter id="rag2" x="-.1" y="-.1" width="1.200" height="1.200"><feTurbulence type="fractalNoise" baseFrequency=".14" numOctaves="2" seed="3"/><feDisplacementMap in="SourceGraphic" scale="5" xChannelSelector="R" yChannelSelector="G"/></filter>
          </defs>
          <g clip-path="url(#ras)">
            <path d="M450 340h580v200H450z" fill="#740000"/>
            <rect x="456" y="343" width="290" height="135" filter="url(#reds)" opacity=".7"/>
            <rect x="740" y="343" width="282" height="140" filter="url(#reds)" opacity=".2"/>
            <rect x="456" y="343" width="330" height="135" filter="url(#patch)" opacity=".75"/>
            <g filter="url(#rag)" fill="#35006d">
              <path d="M620 347l56 0 8 20 4 22-20-6-22-13-10 18-18 8-6-22z"/>
              <path d="M626 400l18-28 35 10 17 22-4 40-8 22-22-4-18 6-14-18z"/>
              <path d="M690 348h12v40l-6 18-10-8zM712 350h24l-2 22-14 10zM715 388l22-2 4 32-20-2-6-12zM590 448h55l-2 12-45-3zM505 455l40-5 34 3v5h-70zM690 448l26 4 55-3 0 9-75 3zM462 350h5v20h-5zM468 380h8v12h-8zM549 358h9v16h-9zM535 398h7v14h-7zM578 400h9v35h-9zM470 405h10v22h-10z"/>
              <path d="M735 395l14 3 2 20-14 6zM755 395l8 5 2 14-10-6zM748 435l18-3-4 12-14 3zM775 441l60 3 5 5-60 4-12-2zM881 398l10-3-2 14-14 2zM780 378h5v10h-5zM794 388h5v12h-5zM700 355h60v10h-60z" opacity=".9"/>
            </g>
            <path d="M740 435l70-20 60-8 45 15 15 10-6 25-60 2-50-6-44 5z" fill="#6a0000" opacity=".6"/>
            <path d="M855 420l60 8-5 14-38-7-60 4 10-10z" fill="#850000" opacity=".6"/>
            <path d="M888 440l5 10 20 8 30 8 70 13v7l-75-10-60-14z" fill="#160006" opacity=".7" filter="url(#rag2)"/>
            <path d="M460 463l70-4 160 2v14l-60-7-90 1-80 5z" fill="#28000a" opacity=".55" filter="url(#rag2)"/>
            <path d="M925 420l35 20-15 28-55-15z" fill="#4c0000" opacity=".5"/>
            <rect x="456" y="343" width="290" height="135" filter="url(#specks)" opacity=".6"/>
            <rect x="740" y="343" width="282" height="142" filter="url(#specks)" opacity=".24"/>
            <path d="M656 405l8-3 1 12-4 6-4-5zM960 360l14 3 5 7-10-1z" fill="#25001e" filter="url(#rag2)" opacity=".7"/>
            <path filter="url(#rag2)" d="M682 449L690 440 691 418 698 413 707 405 716 402 720 407 715 415 718 422 740 424 750 418 770 418 783 407 797 398 820 397.500 845 401.500 838 404 813 406 805 422 800 427 785 428 767 433 750 433 747 443 730 450 717 452 710 447 688 448 684 453 691 458 692 468 688 466 689 459 681 453z" fill="#d40000"/>
            <path d="M450 476L459 475.500 510 471 560 470 610 469 667 470 691 473.500 692 466 696 464 740 463 783 462.500 803 461 823 458.500 837 458.300 863 459.700 890 463.500 930 471 963 477.700 1007 482.500 1030 486V550H450z" fill="#c90000"/>
          </g>
          <path d="M458 345.500h43M540 346.500h48M680 347.800h40M505 535.500h30M600 536.500h50M700 537.500h30M810 538.500h30M925 539.500h34M880 350.500h110" stroke="#160000"/>
          <path fill="none" stroke="#e39a3e" stroke-width="1.250" stroke-linejoin="round" d="M459.300 475.700V448.500L463 448.300 467 450.300 472 451 480 450 487 448 492 448.300 496 451.500 500 453.300 506 452.300 508 448 510 445.300 518 444 521 440 521.500 435 519 431 530 430.700 560 432.700 590 435 600 435 613 433.300 623 429 624 422 621.700 410 625 406 633 400.700 637.300 395 636.700 386.700 646 369.300 653 373 663 377.300 671 378.300 675 384.300 680 388 685 389.300 709 390 708 386 704.300 380 705 377.500 708.300 376.500 711 380 712.700 378 711.700 374 740 373.500 750 376.500 846 378 922.300 378.500 922.500 388 920 391 916 393 909 394.500 910 405 912.500 417 918 417.500 921 420 922 422.500 926 422 930 417 937 413.500 947 407.700 952 409.500 961 411 965 416 966.700 422 964 429 955 433.500 946 437.500 943 441 945 446.500 951 449.500 961 451.700 964.500 455.500 970 458 973 461 980 458.500 990 460.500 1003.500 459.700 1007.300 463V482.300L963 477.700 930 471 890 463.500 863 459.700 837 458.300 823 458.500 803 461 783 462.500 740 463 696 464 692 466.500 690.700 473.300 667 470 610 469 560 470 510 471z"/>
        </svg>
      </section>

      <section class="styling">
        <h2>{@render tx('Layer Styling', 67)}</h2>
        <div class="field top">{@render sm('raster')}{@render tx('Reprojected_HRSL_Lagos_Population', 180, 'tah')}</div>
        <div class="cols">
          <div class="tabs">
            <svg width="38" height="38" viewBox="0 0 38 38"><path d="M20 16l7-8 2 2-6 9z" fill="#a7b3b0"/><path d="M7 16l10-4 8 7-7 8q-8-2-11-11z" fill="#98bda0"/><path d="M8 17l8-2 4 5-4 5q-6-2-8-8z" fill="#c87f6e"/><path d="M11 22l9-5 5 2-7 8z" fill="#799b6e"/></svg>
            <div class="dark">
              <svg width="38" height="140" viewBox="0 0 38 140">
                <path d="M5 8h21v14H5z" fill="#a9c3dc" stroke="#ddd"/><path d="M7 9l8 3 3-3 7 2-3 7-5-2-3 5-5-8z" fill="#5e80a4"/><path d="M5 25h21" stroke="#eee" stroke-width="2"/>
                <path d="M5 40h21v14H5z" fill="#ddd" stroke="#eee"/><path d="M7 51l3-8 3 7 4-4 4 5 5-3" fill="none" stroke="#777"/>
                <path d="M8.500 83V73h14v10" fill="none" stroke="#e8972b" stroke-width="3"/><rect x="11" y="69" width="10" height="8" fill="#d83c32"/><rect x="4" y="83" width="9" height="7" fill="#f1cb3c"/><rect x="17" y="83" width="9" height="7" fill="#7ba3d2"/>
                <path d="M15 105q-6-4-8 3l-2 0 4 4 4-4h-3q1-2 4-1z" fill="#62b57d" stroke="#4d9a68" stroke-width="1.500"/><circle cx="19" cy="115" r="3.500" fill="none" stroke="#e08a32" stroke-width="3.500"/><path d="M13 110l5 1-4 4z" fill="#e08a32"/>
              </svg>
            </div>
          </div>
          <div class="form">
            <div class="field rend">{@render sm('ramp')}{@render tx('Singleband pseudocolor', 113, 'tah')}</div>
            <div class="row band">{@render tx('Band', 23, 'tah')}<div class="field">{@render tx('Band 1 (Gray)', 67, 'tah')}</div></div>
            <div class="row minmax"><span class="lab">{@render tx('Min', 15, 'tah')}</span><div class="field num">{@render tx('4881364986140682', 96, 'tah')}</div><span class="lab2">{@render tx('Max', 20, 'tah')}</span><div class="field num2">{@render tx('1621376478366.', 77, 'tah')}</div></div>
            <div class="row fold"><i></i>{@render tx('Min / Max Value Settings', 139, 'tahb')}</div>
            <div class="row prop"><span>{@render tx('Interpolation', 61, 'tah')}</span><div class="field">{@render tx('Linear', 29, 'tah')}</div></div>
            <div class="row prop"><span>{@render tx('Color ramp', 51, 'tah')}</span><div class="field cr"><div class="grad"></div></div></div>
            <div class="row prop"><span>{@render tx('Label unit suffix', 75, 'tah')}</span><div class="field white"></div></div>
            <div class="row prop"><span>{@render tx('Label precision', 69, 'tah')}</span><div class="field white">{@render tx('4', 6, 'tah')}<svg class="clr" width="13" height="10" viewBox="0 0 13 10"><path d="M4 0h9v10H4L0 5z" fill="#8c8c8c"/><path d="M5.500 2.500l5 5M10.500 2.500l-5 5" stroke="#fff" stroke-width="1.300"/></svg></div></div>
            <div class="table">
              <div class="th"><span>{@render tx('Value', 28)}</span><span>{@render tx('Color', 29)}</span><span>{@render tx('Label', 28)}</span></div>
              {#each classes as [v, w, c, l, lw]}
                <div class="tr"><span class="v">{@render tx(v, w)}</span><span class="sw" style="background:{c}"></span><span class="l">{@render tx(l, lw)}</span></div>
              {/each}
            </div>
            <div class="hs"><span class="hb"><i></i></span><span class="ht"></span></div>
          </div>
        </div>
      </section>
    </main>
  </div>

  <div class="vscroll">
    <svg width="17" height="660" viewBox="0 0 17 660"><path d="M3 24.500l5.500-5.500 5.500 5.500M3 635l5.500 5.500L14 635" fill="none" stroke="#606060" stroke-width="2.600"/><path d="M1 253h15v93H1z" fill="#cdcdcd"/></svg>
  </div>
  <div class="hscroll">
    <svg width="1343" height="15" viewBox="0 0 1343 15"><path d="M11 0h1242v15H11z" fill="#cdcdcd"/><path d="M2.500 2l-4.500 5.500L2.500 13M1301 2.500l5.500 5-5.500 5" fill="none" stroke="#606060" stroke-width="2.600"/></svg>
  </div>

  <div class="popup raster">
    {#each rasterMenu as [n, w, k, more], i}
      <div class="mi" class:hl={i === 5}>{@render sm(k)}{@render tx(n, w)}{#if more}<i></i>{/if}</div>
    {/each}
  </div>
  <div class="popup sub">
    {#each subMenu as [n, w, k], i}
      <div class="mi" class:hl={i === 2}>{@render sm(k)}{@render tx(n, w)}</div>
    {/each}
  </div>
  <svg class="cursor" width="13" height="20" viewBox="0 0 13 20"><path d="M.8 1v15l3.500-3.300 2.300 5.400 2.700-1.200L7 11.800h4.800z" fill="#fff" stroke="#111"/></svg>
</div>

<style>
  :global(body) { margin: 0; background: #f0f0f0; overflow: hidden; }
  .screen { position: relative; width: 1343px; height: 676px; display: grid; grid-template: 661px 15px / 1326px 17px; overflow: hidden; background: #f0f0f0; font: 11.7px "Open Sans", "Noto Sans", sans-serif; color: #111; }
  .screen :global(svg) { display: block; flex: none; }
  .ic { overflow: visible; }
  .tx { display: inline-block; white-space: pre; line-height: 16px; }
  .tah { font-family: "DejaVu Sans Condensed", "DejaVu Sans", sans-serif; font-stretch: condensed; font-size: 11px; }
  .tahb { font-family: "DejaVu Sans Condensed", "DejaVu Sans", sans-serif; font-stretch: condensed; font-weight: 700; font-size: 11.5px; }
  .app { display: flex; flex-direction: column; height: 660px; overflow: hidden; }
  .title { height: 18px; flex: none; background: #fff; display: flex; align-items: flex-start; }
  .title .tx { margin: -2px 0 0 5px; }
  .winbtn { margin-left: auto; margin-right: 24px; }
  .menubar { height: 19px; flex: none; border-bottom: 1px solid #d9d9d9; display: flex; padding-left: 5px; gap: 6px; box-sizing: border-box; }
  .menu { padding: 2px 4px 0; height: 18px; box-sizing: border-box; }
  .menu .tx { display: block; margin-top: -0.5px; }
  .menu :global(u) { text-underline-offset: 1.5px; text-decoration-thickness: 1px; }
  .open { background: #0078d7; color: #fff; }
  .toolbar { height: 39px; flex: none; box-sizing: border-box; border-top: 1px solid #fff; border-bottom: 1px solid #bcbcbc; background: linear-gradient(#f9f9f9, #ececec); display: flex; align-items: center; }
  .toolbar:nth-of-type(3) { height: 38px; }
  .slot { flex: none; width: 24px; height: 24px; display: flex; align-items: center; }
  .slot.grip { width: 6px; height: 20px; background: radial-gradient(circle at 1px 1px, #d4d4d4 0.8px, transparent 1.1px) 0 0 / 3px 3px; }
  .slot.sep { width: 2px; border-left: 1px solid #d4d4d4; box-sizing: border-box; }
  .slot.arr, .slot.arrL { width: 0; height: 0; border: 4px solid transparent; border-top: 4px solid #555; border-bottom: 0; }
  .slot.arrL { border-top-color: #aaa; }
  .zoomIn { background: #dcdcdc; box-shadow: 0 0 0 3px #dcdcdc, 0 0 0 4px #aaa; border-radius: 1px; }
  .slot.combo { width: 87px; height: 22px; box-sizing: border-box; border: 1px solid #a5a5a5; border-radius: 2px; background: linear-gradient(#fff, #f1f1f1); padding: 0 6px 0 3px; justify-content: space-between; }
  .slot.entry { width: 202px; height: 22px; box-sizing: border-box; border: 1px solid #a5a5a5; background: #fff; padding-left: 2px; }
  .ph { color: #888; }
  .down { width: 0; height: 0; border: 4px solid transparent; border-top-color: #555; border-bottom: 0; }
  main { flex: 1; display: flex; min-height: 0; background: #f0f0f0; border-top: 1px solid #b8b8b8; }
  .side { width: 50px; border-right: 1.500px solid #b4b4b4; background: linear-gradient(90deg, #fafafa, #ededed); }
  .hgrip { width: 22px; height: 7px; margin: 6px 0 0 15px; background: radial-gradient(circle at 1px 1px, #d0d0d0 0.8px, transparent 1.1px) 0 0 / 3px 3px; }
  .srow { height: 32.050px; display: flex; align-items: center; padding-left: 7px; gap: 6px; }
  .layers { width: 386px; border-right: 1px solid #b8b8b8; display: flex; flex-direction: column; }
  h2 { font: inherit; margin: 0; }
  .layers h2 { height: 16px; margin: 2px 0 5px 4px; }
  .ltools { height: 24px; display: flex; align-items: center; padding-left: 4px; }
  .lt { width: 24.600px; height: 24px; display: flex; align-items: center; justify-content: center; box-sizing: border-box; }
  .lt.active { border: 1px solid #b5b5b5; background: #dedede; width: 24px; height: 23px; margin-right: 2px; }
  .down.light { border-top-color: #bbb; margin: 0 3px 0 1px; }
  .tree { flex: 1; background: #fff; border-top: 1px solid #aaa; margin-top: 5px; }
  .lrow { height: 18px; display: flex; align-items: center; }
  .child { padding-left: 20px; }
  .exp { width: 10px; height: 8px; margin: 0 5px 0 9px; display: flex; box-sizing: border-box; }
  .exp.c::before { content: ''; border: 4px solid transparent; border-left: 5px solid #666; border-right: 0; }
  .exp.o::before { content: ''; height: 0; border: 4px solid transparent; border-top: 5px solid #555; border-bottom: 0; }
  .cb { width: 14px; height: 14px; border: 1px solid #b9b9b9; box-sizing: border-box; background: #fff; margin-right: 7px; }
  .lname { margin-left: 3px; height: 16px; padding: 0 2px; }
  .lname .tx { display: block; }
  .focus { outline: 1px solid #b8d6ee; background: #f0f8fe; text-decoration: underline; }
  .bold { font-weight: 700; color: #000; font-size: 11.4px; }
  .off { font-weight: 700; font-style: italic; color: #7c7c7c; font-size: 11.4px; }
  .canvas { width: 577px; margin-left: 6px; border-left: 1px solid #b8b8b8; border-right: 1px solid #b8b8b8; background: #fff; overflow: hidden; }
  .styling { flex: 1; margin-left: 9px; display: flex; flex-direction: column; min-width: 0; overflow: hidden; }
  .styling h2 { height: 16px; margin: 2px 0 5px 1px; }
  .field { box-sizing: border-box; border: 1px solid #a9a9a9; border-right: 0; background: linear-gradient(#fff, #f0f0f0); display: flex; align-items: center; border-radius: 2px 0 0 2px; padding-left: 3px; overflow: hidden; }
  .top { height: 24px; padding-left: 5px; flex: none; }
  .top .tx { margin-left: 2px; }
  .cols { flex: 1; display: flex; min-height: 0; }
  .tabs { width: 38px; display: flex; flex-direction: column; }
  .dark { flex: 1; background: #5e5e5e; }
  .form { flex: 1; display: flex; flex-direction: column; min-width: 0; }
  .rend { height: 25px; margin: 15px 0 9px 12px; padding-left: 7px; flex: none; }
  .row { display: flex; align-items: center; flex: none; }
  .band { height: 23px; padding-left: 15px; }
  .band .field { flex: 1; height: 23px; margin-left: 7px; }
  .minmax { height: 22px; margin-top: 4px; padding-left: 15px; }
  .lab { width: 30px; }
  .num { width: 100px; height: 22px; border: 1px solid #a9a9a9; background: #fff; padding-left: 0; }
  .lab2 { width: 26px; margin-left: 6px; }
  .num2 { flex: 1; height: 22px; background: #fff; padding-left: 0; }
  .fold { height: 16px; margin-top: 7px; padding-left: 20px; }
  .fold i { border: 5px solid transparent; border-left: 7px solid #444; border-right: 0; margin-right: 10px; }
  .prop { height: 22px; margin-top: 6px; padding-left: 18px; }
  .fold + .prop { margin-top: 12px; }
  .prop > span { width: 89px; display: flex; }
  .prop .field { flex: 1; height: 22px; }
  .white { background: #fff; }
  .cr { padding-left: 4px; }
  .grad { height: 16px; flex: 1; background: linear-gradient(90deg, #440154, #3b528b 27%, #21918c 52%, #5ec962 78%, #fde725 99%); }
  .clr { margin-left: auto; margin-right: 7px; }
  .table { margin: 6px 0 0 18px; flex: 1; background: #fff; border-left: 1px solid #a9a9a9; border-top: 1px solid #b5b5b5; overflow: hidden; }
  .th { height: 18px; display: flex; background: linear-gradient(#fff, #f0f0f0); border-bottom: 1px solid #c8c8c8; box-sizing: border-box; }
  .th > span { width: 99px; box-sizing: border-box; flex: none; padding-left: 2px; border-right: 1px solid #ccc; }
  .th > span:nth-child(2) { width: 59px; padding-left: 4px; }
  .th > span:nth-child(3) { border: 0; padding-left: 3px; }
  .tr { height: 44px; display: flex; align-items: center; }
  .v { width: 108px; padding-left: 23px; box-sizing: border-box; }
  .sw { width: 42px; height: 42px; border-radius: 6px; }
  .l { margin-left: 12px; color: #aaa; }
  .hs { height: 11px; display: flex; border-top: 1px solid #b5b5b5; box-sizing: border-box; flex: none; }
  .hb { width: 17px; }
  .hb i { display: block; width: 0; border: 4px solid transparent; border-right: 5px solid #555; border-left: 0; margin: 2px 0 0 7px; }
  .ht { flex: 1; background: #fbfbfb; border-left: 1px solid #bbb; border-right: 1px solid #999; margin-right: 1px; }
  .vscroll { height: 661px; }
  .popup { position: absolute; background: #fff; box-sizing: border-box; }
  .popup.raster { left: 327px; top: 37px; width: 195px; height: 186px; border: 1px solid #8c8c8c; border-bottom: 2px solid #8a8a8a; }
  .mi { height: 23px; display: flex; align-items: center; padding: 0 3px 0 6px; }
  .mi .tx { margin-left: 5px; position: relative; top: -1px; }
  .mi .sm { position: relative; top: -1px; }
  .mi i { border: 3.500px solid transparent; border-left: 4px solid #555; border-right: 0; margin-left: auto; }
  .hl { background: #0078d7; color: #fff; }
  .hl i { border-left-color: #9fd0f8; }
  .popup.sub { left: 518px; top: 150px; width: 255px; height: 120px; border: 6px solid #00ff13; overflow: hidden; }
  .sub .mi { padding-left: 4px; position: relative; top: -3px; }
  .cursor { position: absolute; left: 730px; top: 207px; }
</style>
